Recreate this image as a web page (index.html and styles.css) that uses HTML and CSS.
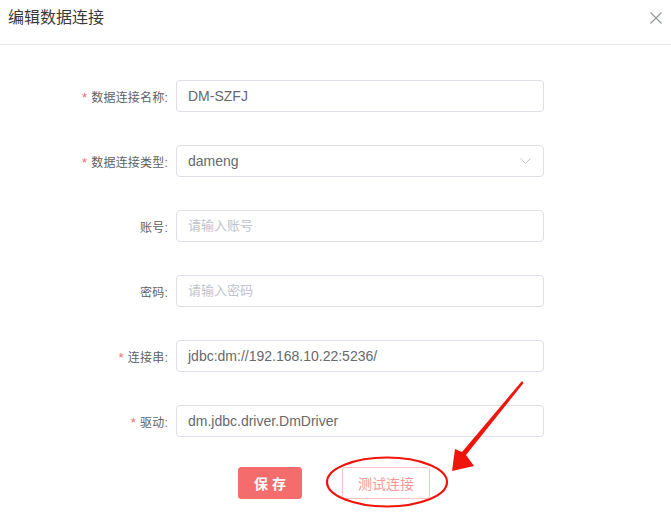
FILE: index.html
```html
<!DOCTYPE html>
<html>
<head>
<meta charset="utf-8">
<link rel="stylesheet" href="styles.css">
</head>
<body>
<div class="dialog">
  <div class="header">
    <span class="title">编辑数据连接</span>
    <svg class="close" width="12" height="12" viewBox="0 0 12 12"><path d="M0.5 0.5L11.5 11.5M11.5 0.5L0.5 11.5" stroke="#909399" stroke-width="1.1" fill="none"/></svg>
  </div>
  <div class="form">
    <div class="row">
      <label class="label"><span class="req">*</span>数据连接名称:</label>
      <div class="input">DM-SZFJ</div>
    </div>
    <div class="row">
      <label class="label"><span class="req">*</span>数据连接类型:</label>
      <div class="input select">dameng
        <svg class="chev" width="11" height="7" viewBox="0 0 11 7"><path d="M0.5 0.5L5.5 5.5L10.5 0.5" stroke="#c0c4cc" stroke-width="1" fill="none"/></svg>
      </div>
    </div>
    <div class="row">
      <label class="label">账号:</label>
      <div class="input ph">请输入账号</div>
    </div>
    <div class="row">
      <label class="label">密码:</label>
      <div class="input ph">请输入密码</div>
    </div>
    <div class="row">
      <label class="label"><span class="req">*</span>连接串:</label>
      <div class="input">jdbc:dm://192.168.10.22:5236/</div>
    </div>
    <div class="row">
      <label class="label"><span class="req">*</span>驱动:</label>
      <div class="input">dm.jdbc.driver.DmDriver</div>
    </div>
    <div class="actions">
      <button class="btn primary">保 存</button>
      <button class="btn plain">测试连接</button>
    </div>
  </div>
</div>
<svg class="annot" width="671" height="528" viewBox="0 0 671 528">
  <ellipse cx="387" cy="482" rx="60" ry="24.5" fill="none" stroke="#f0150c" stroke-width="2.2"/>
  <polygon points="522,381 523.5,383 466,455 474,466 452,471 455,449 462,452" fill="#f0150c"/>
</svg>
</body>
</html>
```
FILE: styles.css
```css
html, body {
  margin: 0;
  padding: 0;
  background: #fff;
}
body {
  width: 671px;
  height: 528px;
  position: relative;
  overflow: hidden;
  font-family: "Liberation Sans", "Noto Sans CJK SC", sans-serif;
}
.dialog {
  width: 671px;
}
.header {
  height: 45px;
  border-bottom: 1px solid #e6e6e6;
  display: flex;
  align-items: flex-start;
  justify-content: space-between;
  padding: 0 9px 0 8px;
  box-sizing: border-box;
}
.title {
  font-size: 16px;
  color: #3a3a3a;
  line-height: 20px;
  margin-top: 8px;
}
.close {
  margin-top: 12px;
}
.form {
  padding-top: 35px;
}
.row {
  display: flex;
  align-items: center;
  height: 32px;
  margin-bottom: 33px;
}
.label {
  width: 176px;
  padding-right: 8px;
  box-sizing: border-box;
  text-align: right;
  font-size: 12px;
  color: #606266;
  letter-spacing: 0.2px;
}
.req {
  color: #f56c6c;
  margin-right: 4px;
  font-size: 13px;
}
.input {
  width: 368px;
  height: 32px;
  box-sizing: border-box;
  border: 1px solid #dcdfe6;
  border-radius: 4px;
  padding-left: 11px;
  font-size: 14px;
  line-height: 30px;
  color: #66696e;
  position: relative;
}
.input.ph {
  color: #c0c4cc;
  font-size: 13px;
}
.chev {
  position: absolute;
  right: 12px;
  top: 12px;
}
.actions {
  display: flex;
  justify-content: center;
  gap: 40px;
  margin-top: -3px;
  padding-right: 3px;
}
.btn {
  height: 32px;
  border-radius: 3px;
  font-family: "Liberation Sans", "Noto Sans CJK SC", sans-serif;
  font-size: 14px;
  padding: 0;
  cursor: pointer;
}
.btn.primary {
  width: 64px;
  background: #f46c6c;
  border: 1px solid #f46c6c;
  color: #fff;
  font-weight: bold;
}
.btn.plain {
  width: 88px;
  background: #fff;
  border: 1px solid #fbc4c4;
  color: #f89898;
}
.annot {
  position: absolute;
  left: 0;
  top: 0;
  pointer-events: none;
}
```
